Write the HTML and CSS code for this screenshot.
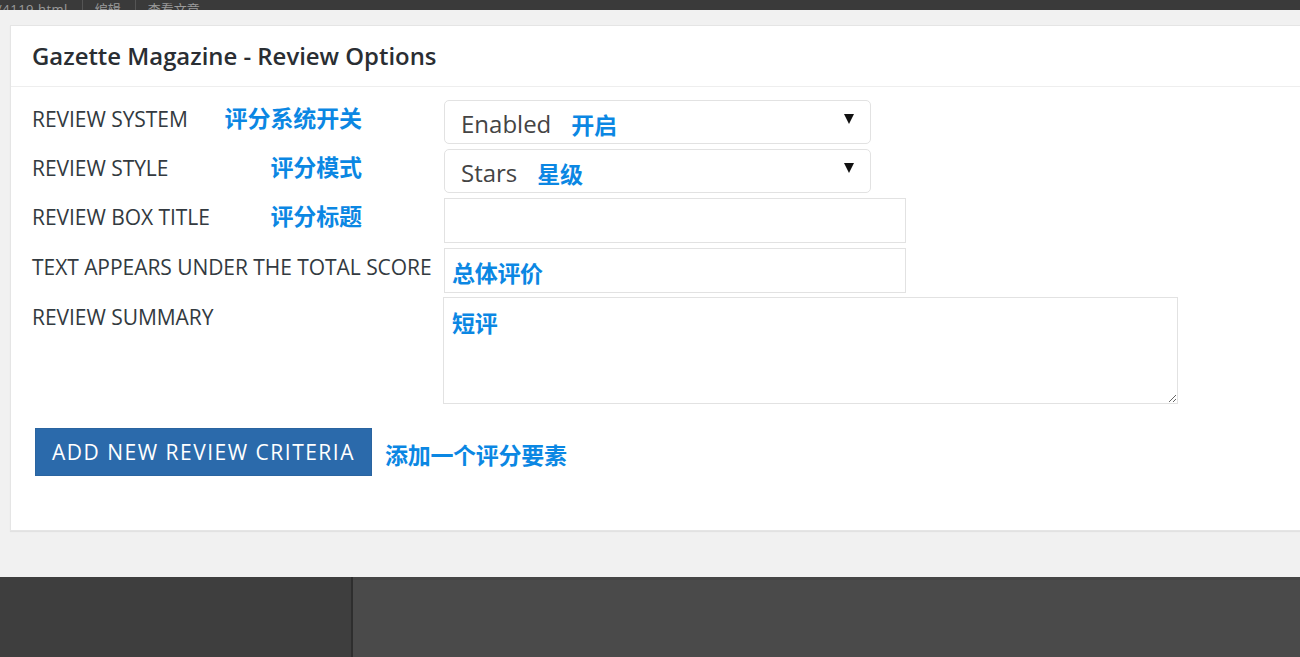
FILE: index.html
```html
<!DOCTYPE html>
<html lang="zh">
<head>
<meta charset="utf-8">
<title>Gazette Magazine - Review Options</title>
<link rel="stylesheet" href="styles.css">
</head>
<body>
<div class="topbar">
  <span class="tb-item">/4119.html</span><span class="tb-sep"></span><span class="tb-item">编辑</span><span class="tb-sep"></span><span class="tb-item">查看文章</span>
</div>
<div class="main">
  <div class="postbox">
    <h2 class="hndle">Gazette Magazine - Review Options</h2>
    <div class="inside">
      <div class="row">
        <div class="label"><span>REVIEW SYSTEM</span><span class="note">评分系统开关</span></div>
        <div class="select w-select"><span class="val">Enabled</span><span class="note-in">开启</span><span class="arrow"></span></div>
      </div>
      <div class="row">
        <div class="label"><span>REVIEW STYLE</span><span class="note">评分模式</span></div>
        <div class="select w-select"><span class="val">Stars</span><span class="note-in">星级</span><span class="arrow"></span></div>
      </div>
      <div class="row">
        <div class="label"><span>REVIEW BOX TITLE</span><span class="note">评分标题</span></div>
        <input class="text w-input" type="text" value="">
      </div>
      <div class="row">
        <div class="label"><span>TEXT APPEARS UNDER THE TOTAL SCORE</span></div>
        <input class="text w-input blue" type="text" value="总体评价">
      </div>
      <div class="row">
        <div class="label"><span>REVIEW SUMMARY</span></div>
        <textarea class="area blue">短评</textarea>
      </div>
      <div class="actions">
        <button class="btn" type="button">ADD NEW REVIEW CRITERIA</button>
        <span class="note-btn">添加一个评分要素</span>
      </div>
    </div>
  </div>
</div>
<div class="footer">
  <div class="foot-left"></div>
  <div class="foot-right"></div>
</div>
</body>
</html>
```
FILE: styles.css
```css
html, body {
  margin: 0;
  padding: 0;
  width: 1300px;
  height: 657px;
  overflow: hidden;
  background: #f1f1f1;
  font-family: "Open Sans", "Noto Sans", "Noto Sans CJK SC", sans-serif;
}

.topbar {
  height: 10px;
  background: #3a3a3a;
  overflow: hidden;
  display: flex;
  align-items: flex-end;
  color: #9a9a9a;
  font-size: 13px;
  line-height: 13px;
  white-space: nowrap;
}
.tb-item {
  position: relative;
  top: 6px;
  padding: 0 14px 0 0;
}
.tb-item:first-child { margin-left: -3px; letter-spacing: 0.5px; }
.tb-sep {
  width: 1px;
  height: 10px;
  background: #555;
  margin-right: 12px;
}

.main {
  height: 567px;
  padding: 15px 0 0 10px;
  box-sizing: border-box;
  background: #f1f1f1;
}

.postbox {
  background: #fff;
  border: 1px solid #e5e5e5;
  box-shadow: 0 1px 1px rgba(0,0,0,0.06);
  height: 506px;
  box-sizing: border-box;
  margin-right: -30px;
}

.hndle {
  margin: 0;
  height: 61px;
  box-sizing: border-box;
  border-bottom: 1px solid #eee;
  padding: 0 0 0 21px;
  font-size: 23.9px;
  font-weight: 600;
  color: #2a2e33;
  line-height: 60px;
  letter-spacing: 0;
}

.inside {
  padding: 13px 0 0 21px;
}

.row {
  display: flex;
  align-items: flex-start;
  margin-bottom: 5px;
}

.label {
  width: 412px;
  flex: none;
  display: flex;
  align-items: center;
  padding-top: 7px;
  font-size: 21px;
  line-height: 24px;
  color: #333a40;
  letter-spacing: -0.05px;
  white-space: nowrap;
}
.note {
  margin-left: auto;
  margin-right: 82px;
  color: #0b87e3;
  font-weight: 700;
  font-size: 23px;
  letter-spacing: -0.1px;
  position: relative;
  top: -1px;
}

.select {
  height: 44px;
  box-sizing: border-box;
  border: 1px solid #e2e2e2;
  border-radius: 5px;
  display: flex;
  align-items: center;
  padding: 3px 16px 0 16px;
  background: #fff;
}
.w-select { width: 427px; }
.val {
  font-size: 24px;
  color: #444;
}
.note-in {
  margin-left: 20px;
  color: #0b87e3;
  font-weight: 700;
  font-size: 23px;
  letter-spacing: -0.2px;
}
.arrow {
  margin-left: auto;
  width: 0;
  height: 0;
  border-left: 5px solid transparent;
  border-right: 5px solid transparent;
  border-top: 10px solid #111;
  margin-top: -9px;
}

.text {
  height: 45px;
  box-sizing: border-box;
  border: 1px solid #e2e2e2;
  border-radius: 0;
  padding: 2px 7px 0;
  margin: 0;
  font-family: inherit;
  outline: none;
  background: #fff;
}
.w-input { width: 462px; }

.blue {
  color: #0b87e3;
  font-weight: 700;
  font-size: 23px;
  letter-spacing: -0.3px;
  font-family: "Open Sans", "Noto Sans CJK SC", sans-serif;
}

.area {
  width: 735px;
  height: 107px;
  box-sizing: border-box;
  margin: -1px 0 0 -1px;
  border: 1px solid #e2e2e2;
  padding: 5px 8px;
  line-height: 40px;
  resize: vertical;
  outline: none;
}

.actions {
  display: flex;
  align-items: center;
  margin-top: 24px;
  padding-left: 3px;
}
.btn {
  width: 337px;
  height: 48px;
  background: #2b6aab;
  border: 1px solid #2a64a0;
  color: #fff;
  font-family: "Open Sans", sans-serif;
  font-size: 21px;
  font-weight: 400;
  letter-spacing: 1.5px;
  padding: 0;
  cursor: pointer;
}
.note-btn {
  margin-left: 13px;
  color: #0b87e3;
  font-weight: 700;
  font-size: 23px;
  letter-spacing: -0.3px;
  position: relative;
  top: 2px;
}

.footer {
  height: 80px;
  display: flex;
}
.foot-left {
  width: 351px;
  background: #3e3e3e;
  border-right: 2px solid #2e2e2e;
}
.foot-right {
  flex: 1;
  background: #4a4a4a;
  border-top: 3px solid #454545;
}
```
